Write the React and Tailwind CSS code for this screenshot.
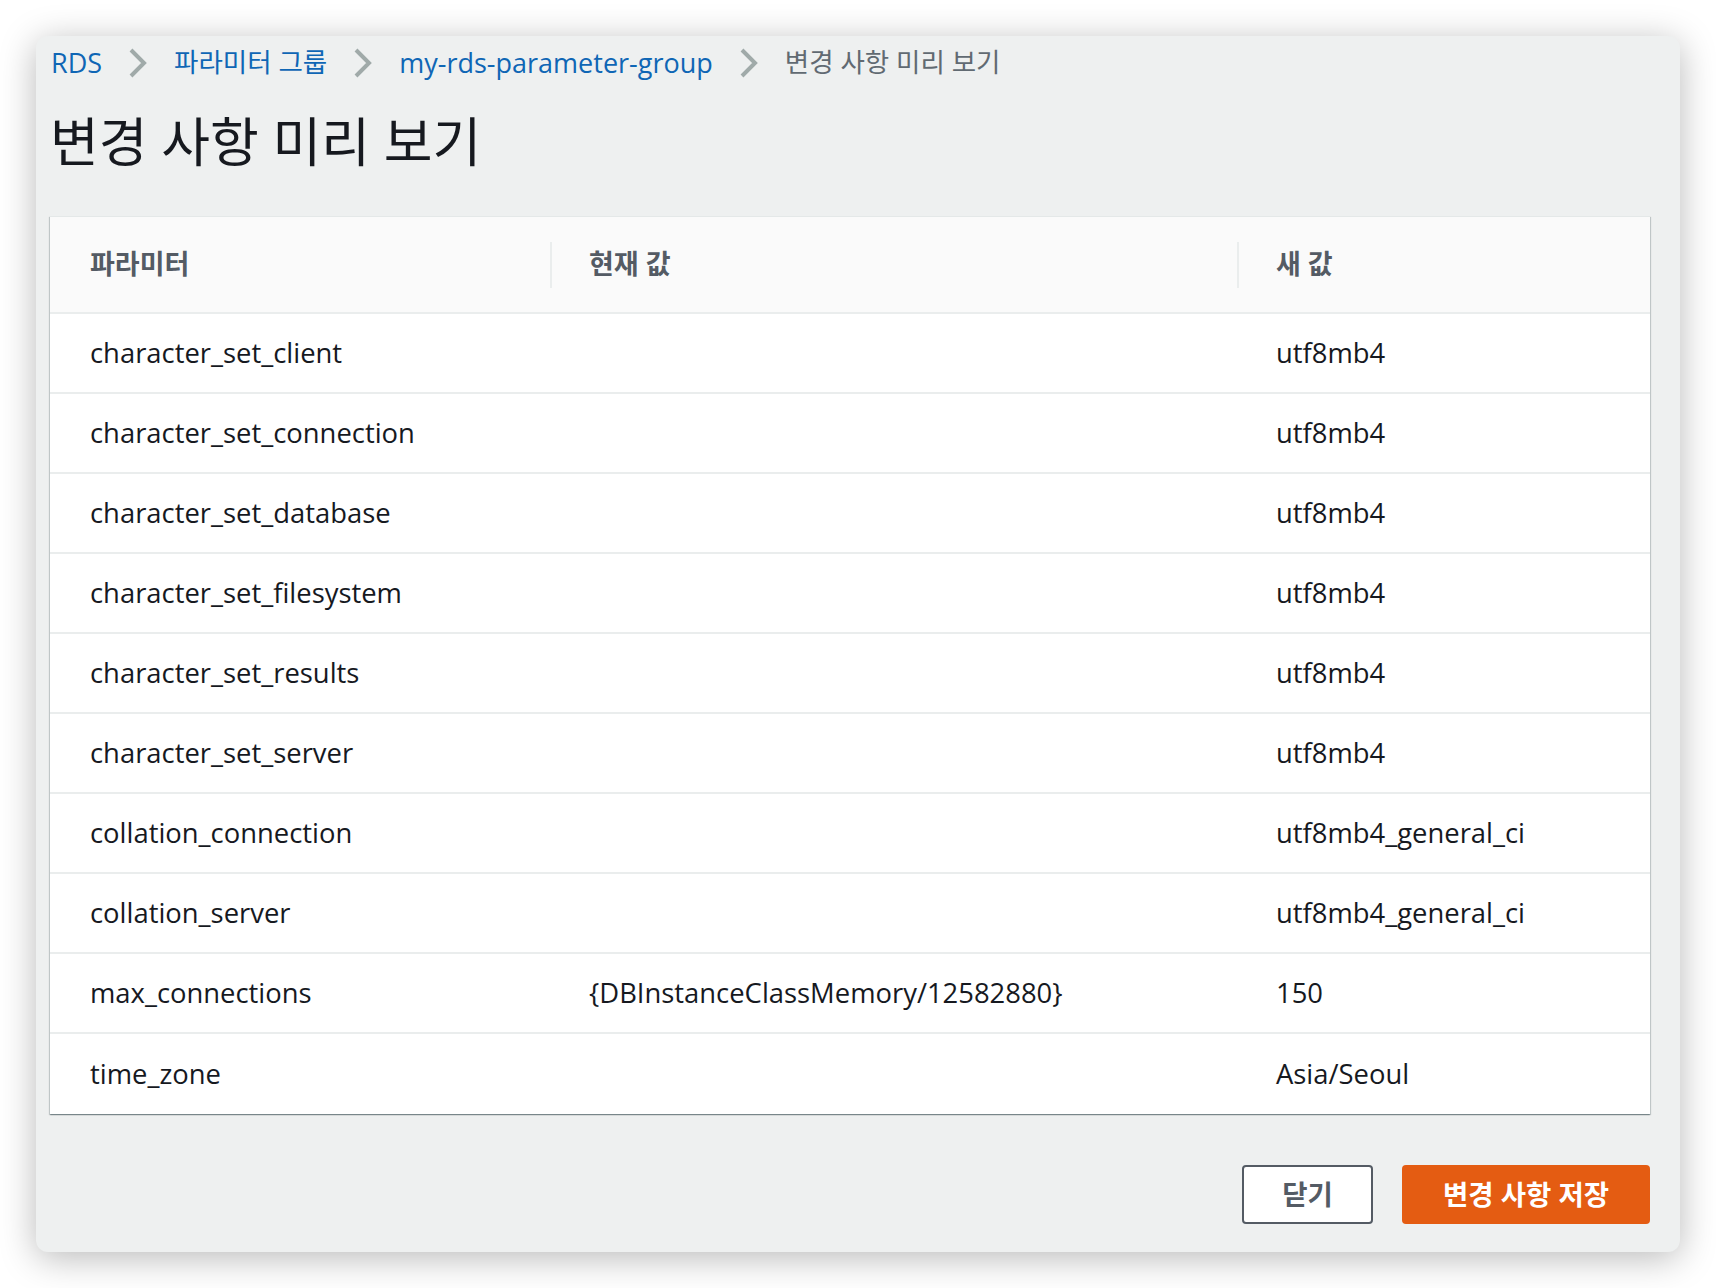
const rows = [
  { name: "character_set_client", current: "", next: "utf8mb4" },
  { name: "character_set_connection", current: "", next: "utf8mb4" },
  { name: "character_set_database", current: "", next: "utf8mb4" },
  { name: "character_set_filesystem", current: "", next: "utf8mb4" },
  { name: "character_set_results", current: "", next: "utf8mb4" },
  { name: "character_set_server", current: "", next: "utf8mb4" },
  { name: "collation_connection", current: "", next: "utf8mb4_general_ci" },
  { name: "collation_server", current: "", next: "utf8mb4_general_ci" },
  { name: "max_connections", current: "{DBInstanceClassMemory/12582880}", next: "150" },
  { name: "time_zone", current: "", next: "Asia/Seoul" },
];

const Chevron = () => (
  <svg width="20" height="30" viewBox="0 0 20 30" className="mx-[26px] shrink-0">
    <polyline points="3,2 16,15 3,28" fill="none" stroke="#a0aaa9" strokeWidth="4" />
  </svg>
);

const App = () => {
  return (
    <div className="w-full h-[1288px] bg-white p-[36px] font-['Open_Sans','Noto_Sans_CJK_KR',sans-serif]">
      <div className="w-full h-full bg-[#eef0f0] rounded-[12px] shadow-[0_6px_36px_rgba(0,0,0,0.28)] pt-[9px] pl-[14px] pr-[30px] flex flex-col">
        {/* breadcrumb */}
        <div className="h-[36px] flex items-center pl-[1px]">
          <span className="text-[27px] text-[#0f66b5]">RDS</span>
          <Chevron />
          <span className="text-[26.5px] text-[#0f66b5]">파라미터 그룹</span>
          <Chevron />
          <span className="text-[27px] text-[#0f66b5]">my-rds-parameter-group</span>
          <Chevron />
          <span className="text-[26.5px] text-[#616a72]">변경 사항 미리 보기</span>
        </div>

        <h1 className="mt-[31px] h-[60px] leading-[60px] text-[53px] text-[#16191f]">변경 사항 미리 보기</h1>

        {/* table */}
        <div className="mt-[44px] bg-white shadow-[0_1px_1px_0_rgba(0,28,36,0.3),1px_1px_1px_0_rgba(0,28,36,0.15),-1px_1px_1px_0_rgba(0,28,36,0.15)] border-t border-[#e4e8e8]">
          <div className="grid grid-cols-[500px_687px_1fr] h-[97px] bg-[#fafafa] border-b-2 border-[#eaeded] text-[27px] font-bold text-[#545b64]">
            <div className="flex items-center pl-[40px]">파라미터</div>
            <div className="flex items-center">
              <span className="w-[2px] h-[46px] bg-[#eaeded]" />
              <span className="ml-[37px]">현재 값</span>
            </div>
            <div className="flex items-center">
              <span className="w-[2px] h-[46px] bg-[#eaeded]" />
              <span className="ml-[37px]">새 값</span>
            </div>
          </div>
          {rows.map((row, index) => (
            <div
              key={index}
              className={`grid grid-cols-[500px_687px_1fr] h-[80px] text-[27.4px] text-[#16191f] ${index < rows.length - 1 ? "border-b-2 border-[#eaeded]" : ""}`}
            >
              <div className="flex items-center pl-[40px]">{row.name}</div>
              <div className="flex items-center pl-[39px]">{row.current}</div>
              <div className="flex items-center pl-[39px]">{row.next}</div>
            </div>
          ))}
        </div>

        {/* buttons */}
        <div className="mt-[51px] flex justify-end gap-[29px]">
          <button className="w-[131px] h-[59px] border-2 border-[#545b64] rounded-[4px] bg-white text-[27.5px] font-bold text-[#545b64]">
            닫기
          </button>
          <button className="w-[248px] h-[59px] rounded-[4px] bg-[#e45c12] text-[27.5px] font-bold text-white">
            변경 사항 저장
          </button>
        </div>
      </div>
    </div>
  );
};

export default App;
